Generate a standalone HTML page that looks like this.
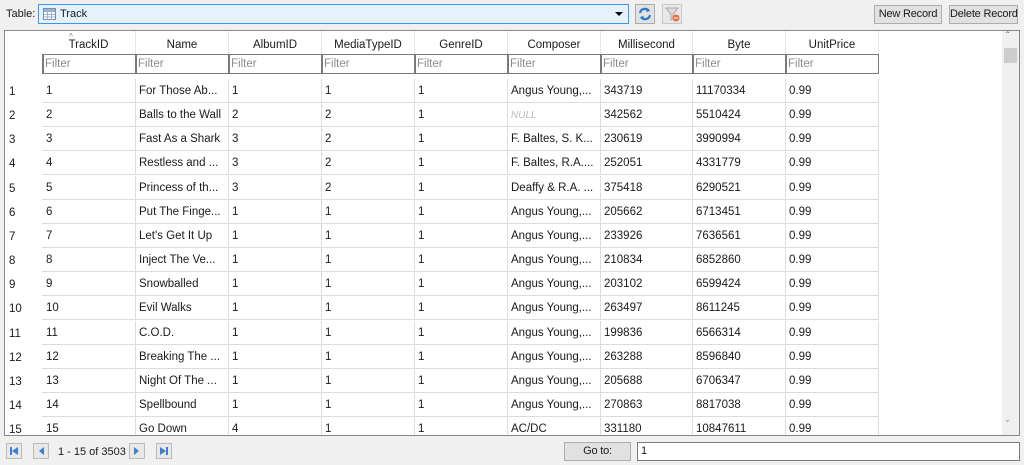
<!DOCTYPE html>
<html><head><style>
body{margin:0;width:1024px;height:465px;background:#f0f0f0;font-family:"Liberation Sans",sans-serif;font-size:11.5px;color:#1a1a1a;position:relative;overflow:hidden}
.a{position:absolute}
.btn{position:absolute;background:#e1e1e1;border:1px solid #adadad;box-sizing:border-box;text-align:center;line-height:17px;font-size:11px;white-space:nowrap;letter-spacing:-0.2px}
.frame{position:absolute;left:4px;top:30px;width:1016px;height:406px;background:#fff;border:1px solid #828790;box-sizing:border-box;overflow:hidden}
.h{position:absolute;top:0;height:23px;line-height:28px;text-align:center;border-right:1px solid #e5e5e5;box-sizing:border-box}
.f{position:absolute;top:23px;height:20px;border:1px solid #7a7a7a;border-left-width:2px;box-sizing:border-box;color:#8a8a8a;line-height:18px;padding-left:1px;background:#fff}
.c{position:absolute;height:24px;line-height:24px;border-right:1px solid #dcdcdc;border-bottom:1px solid #dcdcdc;box-sizing:border-box;padding-left:4px;white-space:nowrap;overflow:hidden}
.n{position:absolute;left:4px;height:24px;line-height:26px}
</style></head><body>
<div class="a" style="left:6px;top:8px;font-size:11px">Table:</div>
<div class="a" style="left:38px;top:4px;width:591px;height:20px;border:1px solid #3399ff;background:#e5f1fb;box-sizing:border-box">
<svg class="a" style="left:4px;top:3px" width="13" height="12"><rect x=".5" y=".5" width="12" height="11" fill="#fff" stroke="#7a8ca8"/><rect x="1" y="1" width="11" height="3" fill="#9bb3d6"/><path d="M1 6.5h11M1 9h11M4.5 4v8M8.5 4v8" stroke="#9bb3d6"/></svg>
<span class="a" style="left:21px;top:3px;font-size:11px">Track</span>
<span class="a" style="left:576px;top:7px;border-left:4px solid transparent;border-right:4px solid transparent;border-top:4px solid #000"></span>
</div>
<div class="a" style="left:635px;top:4px;width:20px;height:20px;border:1px solid #adadad;background:#e1e1e1;box-sizing:border-box"><svg width="18" height="18"><path d="M4 8a5 5 0 0 1 9-2M14 10a5 5 0 0 1-9 2" stroke="#2a7ad0" stroke-width="2.2" fill="none"/><path d="M11 3l3 3-4 1z M7 15l-3-3 4-1z" fill="#2a7ad0"/></svg></div>
<div class="a" style="left:662px;top:4px;width:20px;height:20px;border:1px solid #c8c8c8;background:#e8e8e8;box-sizing:border-box"><svg width="18" height="18"><path d="M3 3h12l-5 6v5l-2 1V9z" fill="#ddd" stroke="#aaa"/><circle cx="13" cy="13" r="3.5" fill="#e8703a"/><path d="M11 13h4" stroke="#fff"/></svg></div>
<div class="btn" style="left:874px;top:5px;width:68px;height:19px">New Record</div>
<div class="btn" style="left:949px;top:5px;width:69px;height:19px">Delete Record</div>

<div class="frame">
<div class="a" style="left:64px;top:1px;font-size:8px;color:#777">^</div>
<div class="h" style="left:37px;width:94px">TrackID</div>
<div class="h" style="left:131px;width:93px">Name</div>
<div class="h" style="left:224px;width:93px">AlbumID</div>
<div class="h" style="left:317px;width:93px">MediaTypeID</div>
<div class="h" style="left:410px;width:93px">GenreID</div>
<div class="h" style="left:503px;width:93px">Composer</div>
<div class="h" style="left:596px;width:92px">Millisecond</div>
<div class="h" style="left:688px;width:93px">Byte</div>
<div class="h" style="left:781px;width:93px">UnitPrice</div>
<div class="f" style="left:37px;width:95px">Filter</div>
<div class="f" style="left:130px;width:94px">Filter</div>
<div class="f" style="left:223px;width:94px">Filter</div>
<div class="f" style="left:316px;width:94px">Filter</div>
<div class="f" style="left:409px;width:94px">Filter</div>
<div class="f" style="left:502px;width:94px">Filter</div>
<div class="f" style="left:595px;width:93px">Filter</div>
<div class="f" style="left:687px;width:94px">Filter</div>
<div class="f" style="left:780px;width:94px">Filter</div>
<div id="rows"></div>
<div class="a" style="left:997px;top:0;width:17px;height:404px;background:#f0f0f0"></div>
<div class="a" style="left:999px;top:17px;width:13px;height:15px;background:#cdcdcd"></div>
<div class="a" style="left:1001px;top:0;font-size:10px;color:#555">&#710;</div>
<div class="a" style="left:1001px;top:388px;font-size:9px;color:#555">&#711;</div>
</div>
<script>
var d=[["For Those Ab...","1","1","1","Angus Young,...","343719","11170334"],["Balls to the Wall","2","2","1","NULL","342562","5510424"],["Fast As a Shark","3","2","1","F. Baltes, S. K...","230619","3990994"],["Restless and ...","3","2","1","F. Baltes, R.A....","252051","4331779"],["Princess of th...","3","2","1","Deaffy &amp; R.A. ...","375418","6290521"],["Put The Finge...","1","1","1","Angus Young,...","205662","6713451"],["Let's Get It Up","1","1","1","Angus Young,...","233926","7636561"],["Inject The Ve...","1","1","1","Angus Young,...","210834","6852860"],["Snowballed","1","1","1","Angus Young,...","203102","6599424"],["Evil Walks","1","1","1","Angus Young,...","263497","8611245"],["C.O.D.","1","1","1","Angus Young,...","199836","6566314"],["Breaking The ...","1","1","1","Angus Young,...","263288","8596840"],["Night Of The ...","1","1","1","Angus Young,...","205688","6706347"],["Spellbound","1","1","1","Angus Young,...","270863","8817038"],["Go Down","4","1","1","AC/DC","331180","10847611"]];
var L=[37,130,223,316,409,502,595,687,780,873],h="";
d.forEach(function(r,i){var t=Math.round(48+i*24.15);var v=[String(i+1)].concat(r).concat(["0.99"]);
h+='<div class="n" style="top:'+t+'px">'+(i+1)+'</div>';
for(var j=0;j<9;j++){var s=v[j]=="NULL"?'<i style="color:#bbb;font-size:10px">NULL</i>':v[j];
h+='<div class="c" style="top:'+t+'px;left:'+L[j]+'px;width:'+(L[j+1]-L[j]+1)+'px">'+s+'</div>';}});
document.getElementById("rows").innerHTML=h;
</script>
<div class="a" style="left:6px;top:443px;width:16px;height:16px;border:1px solid #bbb;background:#e8e8e8;box-sizing:border-box"><svg width="14" height="14"><rect x="3" y="3" width="2" height="8" fill="#3c7fd4"/><path d="M11 3v8L5 7z" fill="#3c7fd4"/></svg></div>
<div class="a" style="left:33px;top:443px;width:16px;height:16px;border:1px solid #bbb;background:#e8e8e8;box-sizing:border-box"><svg width="14" height="14"><path d="M10 3v8L5 7z" fill="#3c7fd4"/></svg></div>
<div class="a" style="left:58px;top:446px;font-size:11px">1 - 15 of 3503</div>
<div class="a" style="left:129px;top:443px;width:16px;height:16px;border:1px solid #bbb;background:#e8e8e8;box-sizing:border-box"><svg width="14" height="14"><path d="M4 3v8l5-4z" fill="#3c7fd4"/></svg></div>
<div class="a" style="left:156px;top:443px;width:16px;height:16px;border:1px solid #bbb;background:#e8e8e8;box-sizing:border-box"><svg width="14" height="14"><path d="M3 3v8l6-4z" fill="#3c7fd4"/><rect x="9" y="3" width="2" height="8" fill="#3c7fd4"/></svg></div>
<div class="btn" style="left:564px;top:442px;width:67px;height:19px">Go to:</div>
<div class="a" style="left:637px;top:442px;width:383px;height:19px;border:1px solid #7a7a7a;background:#fff;box-sizing:border-box;padding-left:3px;line-height:17px;font-size:11px">1</div>
</body></html>
